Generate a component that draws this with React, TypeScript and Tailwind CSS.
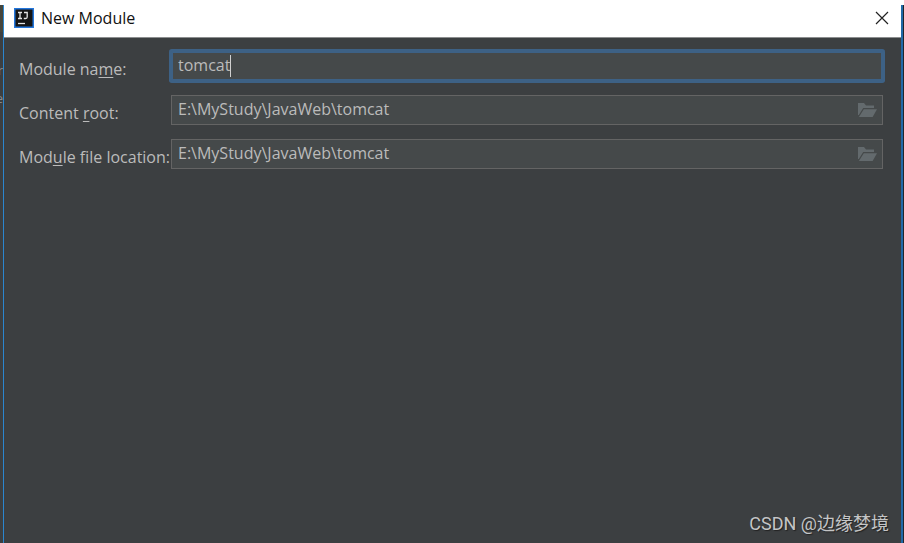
import { useState } from "react";
import type { ReactNode } from "react";

const FONT = "font-['Open_Sans','Noto_Sans_CJK_SC',sans-serif]";

function IdeaLogo() {
  return (
    <svg viewBox="0 0 20 20" width="20" height="20" fill="none">
      <rect width="20" height="20" fill="#2477dc" />
      <rect x="1.5" y="1.5" width="17" height="17" fill="#151515" />
      <path d="M4 4.5 H8 M6 4.5 V10.5 M4 10.5 H8" stroke="#e4e4e4" strokeWidth="1.3" />
      <path d="M10 4.5 H13.2 V9 Q13.2 10.5 11.6 10.5 H9.8" stroke="#e4e4e4" strokeWidth="1.3" />
      <path d="M4 15.5 H11" stroke="#e4e4e4" strokeWidth="1.3" />
    </svg>
  );
}

function FolderIcon() {
  return (
    <svg viewBox="0 0 19 15" width="19" height="15" fill="#636a6d">
      <path d="M0 0 H6 L8 2.5 H16 V5 H5.2 L0.8 12 H0 Z" />
      <path d="M5.8 6.2 H19 L14.6 14 H0.9 Z" />
    </svg>
  );
}

type FieldProps = {
  id: string;
  label: ReactNode;
  value: string;
  onChange: (v: string) => void;
  active?: boolean;
};

function Field({ id, label, value, onChange, active }: FieldProps) {
  return (
    <>
      <label htmlFor={id} className="pt-[6px] text-[16px] leading-6 whitespace-nowrap text-[#bbbbbb]">
        {label}
      </label>
      <div className="relative h-[30px]">
        <input
          id={id}
          type="text"
          value={value}
          spellCheck={false}
          onChange={(e) => onChange(e.target.value)}
          className={
            active
              ? "block h-full w-full rounded-[1px] border-2 border-[#3d6185] bg-[#45494a] px-[5px] pb-[2px] text-[16px] text-[#bbbbbb] caret-transparent ring-2 ring-[#3d6185] outline-none"
              : "block h-full w-full border border-[#646464] bg-[#45494a] pr-8 pb-[2px] pl-[6px] text-[16px] text-[#bbbbbb] outline-none"
          }
        />
        {active ? (
          <div className="pointer-events-none absolute inset-y-1 left-[7px] flex text-[16px]">
            <span className="invisible">{value}</span>
            <span className="w-px bg-[#d0d0d0]" />
          </div>
        ) : (
          <button type="button" aria-label="Browse" className="absolute top-2 right-[6px]">
            <FolderIcon />
          </button>
        )}
      </div>
    </>
  );
}

export default function App() {
  const [name, setName] = useState("tomcat");
  const [root, setRoot] = useState("E:\\MyStudy\\JavaWeb\\tomcat");
  const [location, setLocation] = useState("E:\\MyStudy\\JavaWeb\\tomcat");

  return (
    <div className={`flex h-screen flex-col overflow-hidden bg-white pt-[5px] ${FONT}`}>
      <div className="flex min-h-0 flex-1">
        {/* sliver of the editor behind the dialog */}
        <div className="flex w-[3px] shrink-0 flex-col overflow-hidden bg-[#3c3f41] text-[13px] leading-7 text-[#8a8a8a]">
          <div className="h-[27px] shrink-0 bg-[#45453c]" />
          <span className="flex justify-end pt-6">r</span>
          <span className="flex justify-end">e</span>
        </div>

        <main className="flex min-w-0 flex-1 flex-col border-r-2 border-l border-r-[#2169a8] border-l-[#2b86cf] bg-[#3c3f41]">
          <header className="flex h-[33px] items-center border-b border-[#8c8e8f] bg-white pr-3 pb-[6px] pl-[10px]">
            <IdeaLogo />
            <h1 className="ml-[7px] text-[16px] text-[#111111]">New Module</h1>
            <button type="button" aria-label="Close" className="ml-auto">
              <svg viewBox="0 0 14 14" width="14" height="14" stroke="#222" strokeWidth="1.2">
                <path d="M1 1 L13 13 M13 1 L1 13" />
              </svg>
            </button>
          </header>

          <form className="grid grid-cols-[152px_1fr] gap-y-[14px] pt-[13px] pr-[18px] pl-[15px]">
            <Field
              id="module-name"
              label={<>Module na<u className="underline-offset-2">m</u>e:</>}
              value={name}
              onChange={setName}
              active
            />
            <Field
              id="content-root"
              label={<>Content <u className="underline-offset-2">r</u>oot:</>}
              value={root}
              onChange={setRoot}
            />
            <Field
              id="file-location"
              label={<>Mod<u className="underline-offset-2">u</u>le file location:</>}
              value={location}
              onChange={setLocation}
            />
          </form>

          <p className="mt-auto pr-3 pb-[5px] text-right font-['Roboto','Noto_Sans_CJK_SC',sans-serif] text-[18px] leading-7 text-[#c4c5c6] [text-shadow:1px_1px_1px_#222]">
            CSDN @边缘梦境
          </p>
        </main>

        <div className="w-px shrink-0 bg-[#20262b]" />
      </div>
    </div>
  );
}
